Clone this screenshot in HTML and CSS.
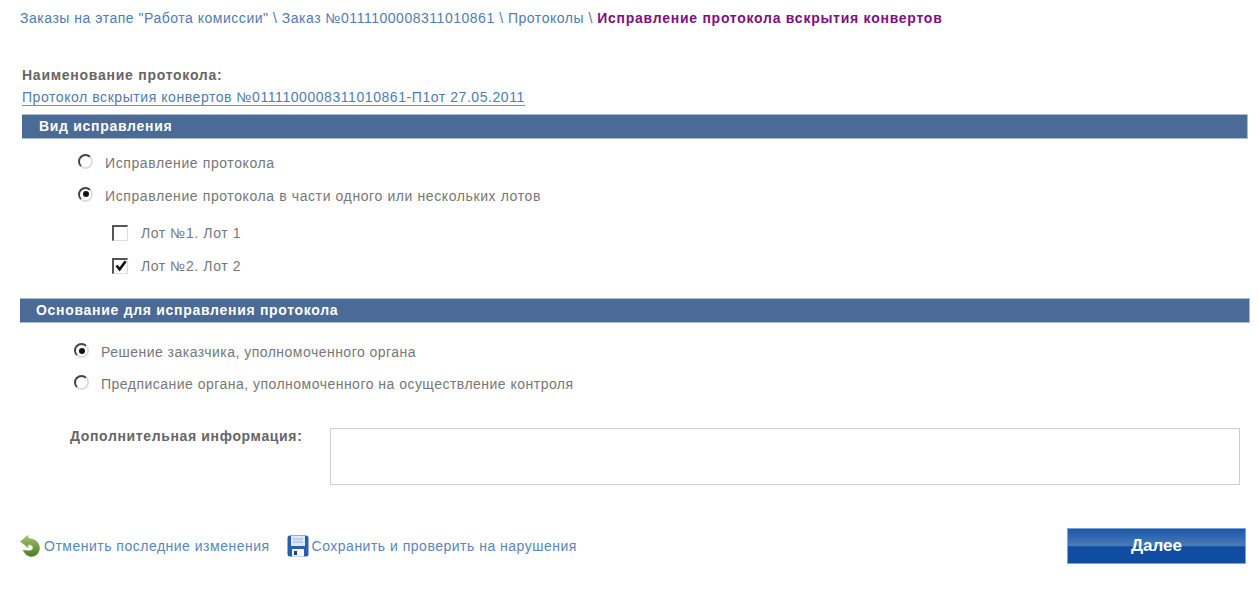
FILE: index.html
```html
<!DOCTYPE html>
<html lang="ru">
<head>
    <meta charset="UTF-8">
    <title>Исправление протокола вскрытия конвертов</title>
    <link rel="stylesheet" href="styles.css">
</head>
<body>
    <div class="crumbs">
        <a href="#">Заказы на этапе "Работа комиссии"</a> \ <a href="#">Заказ №0111100008311010861</a> \ <a href="#">Протоколы</a> \ <b>Исправление протокола вскрытия конвертов</b>
    </div>

    <div class="proto">
        <div class="proto-title">Наименование протокола:</div>
        <a href="#" class="proto-link">Протокол вскрытия конвертов №0111100008311010861-П1от 27.05.2011</a>
    </div>

    <div class="bar bar-first">Вид исправления</div>
    <div class="opts opts-first">
        <div class="opt"><span class="radio"></span>Исправление протокола</div>
        <div class="opt"><span class="radio on"></span>Исправление протокола в части одного или нескольких лотов</div>
        <div class="lots">
            <div class="opt lot"><span class="check"></span>Лот №1. Лот 1</div>
            <div class="opt lot"><span class="check">
                <svg width="12" height="12" viewBox="0 0 12 12"><path d="M1.5 5.5 L4.6 9.4 L10.6 1.2" fill="none" stroke="#111" stroke-width="2.6"/></svg>
            </span>Лот №2. Лот 2</div>
        </div>
    </div>

    <div class="bar bar-second">Основание для исправления протокола</div>
    <div class="opts opts-second">
        <div class="opt"><span class="radio on"></span>Решение заказчика, уполномоченного органа</div>
        <div class="opt"><span class="radio"></span>Предписание органа, уполномоченного на осуществление контроля</div>
    </div>

    <div class="info">
        <label class="info-label">Дополнительная информация:</label>
        <div class="info-box"></div>
    </div>

    <div class="foot">
        <a href="#" class="act act-undo">
            <svg width="22" height="22" viewBox="0 0 22 22">
                <defs>
                    <linearGradient id="gr" x1="0" y1="0" x2="0" y2="1">
                        <stop offset="0" stop-color="#a4c46e"/>
                        <stop offset="1" stop-color="#4c7a22"/>
                    </linearGradient>
                </defs>
                <path d="M8 0.5 L0.5 6.5 L8 12.5 L8 9.5 C11 9.5 13 10.5 13 12.8 C13 15 10.5 16 6.5 15.5 L3 15 C5 19.5 8 21.5 11.5 21.5 C16.5 21.5 19.5 17.5 19.5 13 C19.5 7.5 15 3.5 8 3.5 Z" fill="url(#gr)" stroke="#7fa24e" stroke-width="0.5"/>
            </svg>
            Отменить последние изменения
        </a>
        <a href="#" class="act act-save">
            <svg width="22" height="22" viewBox="0 0 22 22">
                <rect x="0.5" y="0.5" width="21" height="21" rx="2.5" fill="#2a5fae"/>
                <rect x="4" y="1" width="14" height="10" fill="#dfe9f6"/>
                <rect x="6" y="3.5" width="10" height="1" fill="#8fb0dc"/>
                <rect x="6" y="6.5" width="10" height="1" fill="#8fb0dc"/>
                <rect x="5" y="14" width="12" height="7.5" fill="#f4f6fa"/>
                <rect x="7" y="16" width="3" height="4" fill="#1f3f78"/>
            </svg>
            Сохранить и проверить на нарушения
        </a>
        <button class="next">Далее</button>
    </div>
</body>
</html>
```

FILE: styles.css
```css
*{
    margin: 0;
    padding: 0;
    box-sizing: border-box;
}
body{
    width: 1259px;
    height: 593px;
    background: white;
    font-family: "Liberation Sans", Arial, sans-serif;
    font-size: 14px;
    letter-spacing: 0.56px;
    color: #777;
    overflow: hidden;
}
a{
    color: #4f7cb4;
    text-decoration: none;
}
.crumbs{
    padding: 10px 0 0 20px;
    height: 67px;
    line-height: 16px;
    color: #4f7cb4;
    letter-spacing: 0.52px;
}
.crumbs b{
    color: #800f80;
    letter-spacing: 0.74px;
}
.proto{
    padding-left: 22px;
    height: 47px;
}
.proto-title{
    font-weight: bold;
    letter-spacing: 0.74px;
    color: #666;
    line-height: 16px;
}
.proto-link{
    display: block;
    width: max-content;
    line-height: 16px;
    margin-top: 6px;
    border-bottom: 1px solid #6f93c6;
}
.bar{
    height: 25px;
    line-height: 23px;
    background: #4b6a96;
    border: 1px solid #a9bcd6;
    border-width: 1px 1px 1px 0;
    color: white;
    font-weight: bold;
    letter-spacing: 0.7px;
}
.bar-first{
    margin-left: 22px;
    margin-right: 11px;
    padding-left: 17px;
}
.bar-second{
    margin-left: 20px;
    margin-right: 9px;
    padding-left: 16px;
}
.opts-first{
    padding: 7px 0 0 78px;
    height: 159px;
    letter-spacing: 0.6px;
}
.opts-second{
    padding: 13px 0 0 74px;
    height: 105px;
    letter-spacing: 0.48px;
}
.opts-second .opt{
    height: 32px;
}
.opt{
    display: flex;
    align-items: center;
    height: 33px;
}
.radio{
    width: 15px;
    height: 15px;
    border-radius: 50%;
    border: 2px solid #444;
    border-right-color: #ddd;
    border-bottom-color: #ddd;
    margin-right: 12px;
    margin-top: -3px;
    display: flex;
    align-items: center;
    justify-content: center;
}
.radio.on::after{
    content: "";
    width: 6px;
    height: 6px;
    border-radius: 50%;
    background: #111;
}
.lots{
    padding: 4px 0 0 34px;
}
.check{
    width: 16px;
    height: 16px;
    border: 2px solid #555;
    border-right: 1px solid #ddd;
    border-bottom: 1px solid #ddd;
    margin-right: 13px;
    display: flex;
    align-items: center;
    justify-content: center;
}
.info{
    display: flex;
    padding-left: 70px;
    height: 100px;
}
.info-label{
    width: 260px;
    font-weight: bold;
    letter-spacing: 0.64px;
    color: #666;
}
.info-box{
    width: 910px;
    height: 57px;
    border: 1px solid #cfcfcf;
}
.foot{
    display: flex;
    align-items: center;
    padding: 0 13px 0 20px;
}
.act{
    display: flex;
    align-items: center;
    gap: 3px;
    color: #5a86bc;
    letter-spacing: 0.5px;
}
.act-undo{
    gap: 2px;
}
.act-save{
    margin-left: 17px;
}
.next{
    margin-left: auto;
    width: 179px;
    height: 36px;
    border: 1px solid #7fa3d8;
    background: linear-gradient(#1c57a8 0, #4a7cba 50%, #0f4da3 52%, #0f4da3 100%);
    color: white;
    font-family: "Liberation Sans", Arial, sans-serif;
    font-size: 17px;
    font-weight: bold;
}
```
